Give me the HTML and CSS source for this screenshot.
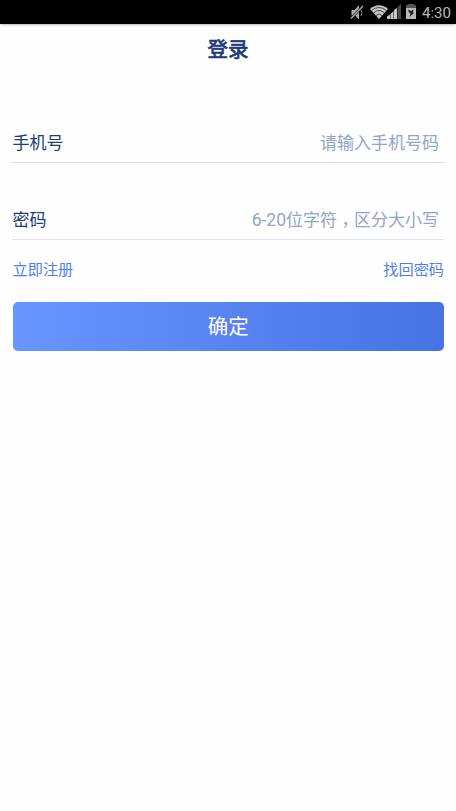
FILE: index.html
```html
<!DOCTYPE html>
<html lang="zh-CN">
<head>
<meta charset="utf-8">
<title>登录</title>
<link rel="stylesheet" href="styles.css">
</head>
<body>
<div class="status">
  <svg class="icons" width="70" height="24" viewBox="0 0 70 24">
    <path d="M1.500 10h3L9 5v4l-6 6.500H1.500z" fill="#a9a9a9"/>
    <path d="M5 15.500L9 11v8.500z" fill="#a9a9a9"/>
    <path d="M11 9.500q2 3 0 6.500" fill="none" stroke="#8a8a8a"/>
    <path d="M1 18.500L13 6" stroke="#000" stroke-width="2.500"/>
    <path d="M1 18.500L13 6" stroke="#b5b5b5" stroke-width="1.200"/>
    <path d="M20 9Q29 1.500 38 9L29 19z" fill="#c8c8c8"/>
    <path d="M21.500 10.500Q29 4.500 36.500 10.500M23.500 13Q29 8 34.500 13M26 15.500Q29 12.500 32 15.500" fill="none" stroke="#222" stroke-width=".8"/>
    <path d="M37 19v-2.500l3-2V19zM40.500 19v-5l3-3v8zM44 19v-9l3-2v11z" fill="#c8c8c8"/>
    <path d="M47.500 19V7L51 4v15z" fill="#4b4b4b"/>
    <path d="M56 7h10v12H56z" fill="#b8b8b8"/>
    <path d="M58 4h6v1h2v3H56V5h2z" fill="#555"/>
    <path d="M58 9.500l3 1.500 2.500-1.500-.5 3 1 .500-4.500 4 1-3.500-1.500-1z" fill="#222"/>
  </svg>
  <span class="time">4:30</span>
</div>
<h1 class="title">登录</h1>
<main class="form">
  <div class="row phone"><span>手机号</span><span class="hint">请输入手机号码</span></div>
  <div class="row password"><span>密码</span><span class="hint"><span class="range">6-20</span>位字符<span class="comma" lang="zh-TW">，</span>区分大小写</span></div>
  <div class="links"><span>立即注册</span><span>找回密码</span></div>
  <div class="button">确定</div>
</main>
</body>
</html>
```

FILE: styles.css
```css
* { box-sizing: border-box; }
body {
  margin: 0;
  height: 811px;
  overflow: hidden;
  background: #fefefe;
  font-family: Roboto, "Noto Sans CJK SC", sans-serif;
}
.status {
  height: 24px;
  background: #000;
  box-shadow: 0 0 3px rgba(0, 0, 0, .5);
  display: flex;
  justify-content: flex-end;
  padding-right: 6px;
}
.icons { margin-right: 2px; }
.time {
  width: 28px;
  font-size: 15px;
  line-height: 26px;
  color: #b8b8b8;
  white-space: nowrap;
}
.title {
  margin: 0;
  height: 49px;
  font-size: 20.5px;
  line-height: 52px;
  font-weight: 400;
  -webkit-text-stroke: .7px #213b78;
  text-align: center;
  color: #213b78;
}
.form { padding: 0 12px; }
.row {
  display: flex;
  justify-content: space-between;
  height: 40px;
  padding: 0 5px 0 .5px;
  font-size: 17px;
  line-height: 40px;
  color: #213b78;
  border-bottom: 1px solid #d6dced;
}
.phone { margin-top: 50px; }
.password { margin-top: 37px; border-color: #e1e4ee; }
.hint { color: #92a5c6; }
.password .hint { line-height: 40px; }
.range { font-size: 17.5px; line-height: 1; }
.comma {
  position: relative;
  top: 5px;
  line-height: 1;
  font-family: "Noto Sans CJK TC", sans-serif;
}
.links {
  display: flex;
  justify-content: space-between;
  height: 62px;
  padding-left: .5px;
  font-size: 15.2px;
  line-height: 60px;
  color: #4f7df4;
}
.button {
  height: 49px;
  margin-left: .5px;
  border-radius: 5px;
  background: linear-gradient(90deg, #6995ff, #4673e4);
  color: #fff;
  font-size: 20.5px;
  line-height: 50px;
  text-align: center;
}
```
